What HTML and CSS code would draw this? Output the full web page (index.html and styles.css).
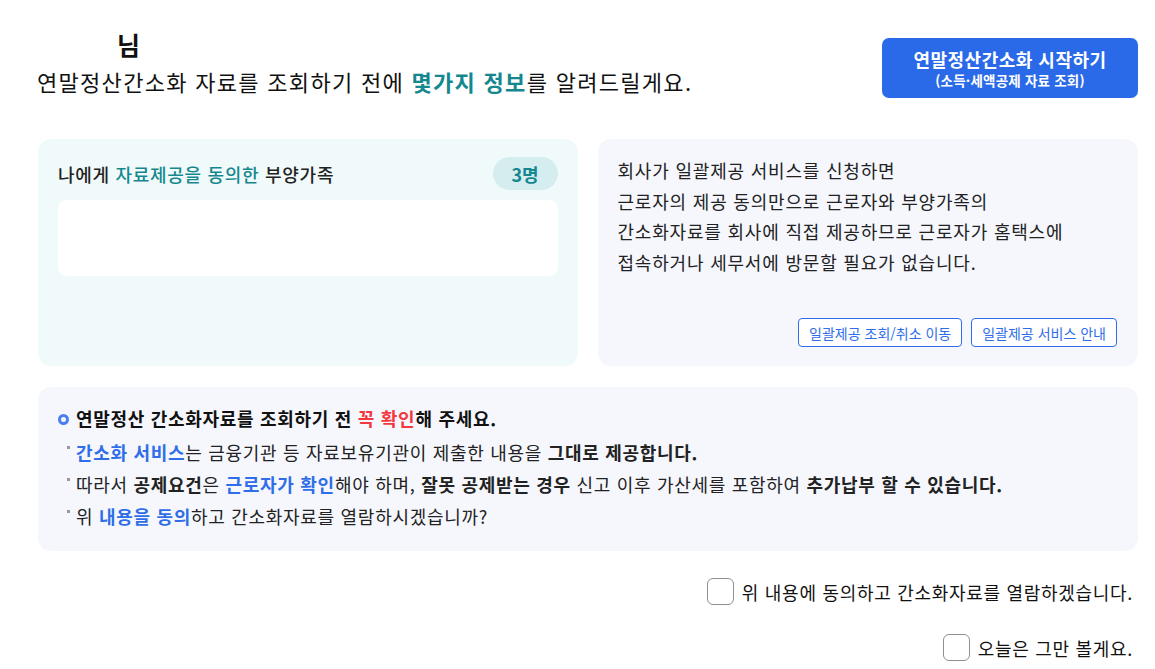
FILE: index.html
```html
<!DOCTYPE html>
<html lang="ko">
<head>
<meta charset="utf-8">
<link rel="stylesheet" href="styles.css">
</head>
<body>
<div class="page">
  <header class="head">
    <div class="head-text">
      <div class="name"><span class="user"></span>님</div>
      <div class="intro">연말정산간소화 자료를 조회하기 전에 <b class="teal">몇가지 정보</b>를 알려드릴게요.</div>
    </div>
    <button class="start-btn">
      <span class="start-main">연말정산간소화 시작하기</span>
      <span class="start-sub">(소득·세액공제 자료 조회)</span>
    </button>
  </header>

  <section class="cards">
    <div class="card card-family">
      <div class="family-head">
        <div class="family-title">나에게 <span class="teal">자료제공을 동의한</span> 부양가족</div>
        <div class="badge">3명</div>
      </div>
      <div class="family-box"></div>
    </div>
    <div class="card card-info">
      <p class="info-text">회사가 일괄제공 서비스를 신청하면<br>근로자의 제공 동의만으로 근로자와 부양가족의<br>간소화자료를 회사에 직접 제공하므로 근로자가 홈택스에<br>접속하거나 세무서에 방문할 필요가 없습니다.</p>
      <div class="info-actions">
        <button class="line-btn">일괄제공 조회/취소 이동</button>
        <button class="line-btn">일괄제공 서비스 안내</button>
      </div>
    </div>
  </section>

  <section class="notice">
    <h2 class="notice-title"><span class="ring"></span>연말정산 간소화자료를 조회하기 전 <span class="red">꼭 확인</span>해 주세요.</h2>
    <ul class="notice-list">
      <li><b class="blue">간소화 서비스</b>는 금융기관 등 자료보유기관이 제출한 내용을 <b>그대로 제공합니다.</b></li>
      <li>따라서 <b>공제요건</b>은 <b class="blue">근로자가 확인</b>해야 하며, <b>잘못 공제받는 경우</b> 신고 이후 가산세를 포함하여 <b>추가납부 할 수 있습니다.</b></li>
      <li>위 <b class="blue">내용을 동의</b>하고 간소화자료를 열람하시겠습니까?</li>
    </ul>
  </section>

  <div class="checks">
    <label class="check"><span class="box"></span><span>위 내용에 동의하고 간소화자료를 열람하겠습니다.</span></label>
    <label class="check"><span class="box"></span><span>오늘은 그만 볼게요.</span></label>
  </div>
</div>
</body>
</html>
```

FILE: styles.css
```css
* { box-sizing: border-box; }
html, body { margin: 0; padding: 0; background: #fff; }
body {
  font-family: "Noto Sans CJK KR", "Noto Sans", sans-serif;
  color: #222;
}
.page {
  width: 1155px;
  padding: 26px 17px 0 38px;
}
.teal { color: #14878f; }
.blue { color: #2f6ee8; }
.red { color: #f2383c; }
b { font-weight: 700; }

.head {
  display: flex;
  justify-content: space-between;
  align-items: flex-start;
}
.name {
  padding-left: 79px;
  font-size: 25px;
  font-weight: 700;
  line-height: 36px;
  color: #111;
}
.intro {
  margin-top: 3px;
  margin-left: -1px;
  font-size: 22px;
  line-height: 32px;
  letter-spacing: 1.3px;
  color: #111;
}
.start-btn {
  margin-top: 12px;
  width: 256px;
  height: 60px;
  border: none;
  border-radius: 7px;
  background: #2a6ae8;
  color: #fff;
  font-family: inherit;
  display: flex;
  flex-direction: column;
  align-items: center;
  justify-content: center;
  padding: 0;
}
.start-main { font-size: 18px; font-weight: 700; line-height: 23px; letter-spacing: 0.5px; }
.start-sub { font-size: 13.5px; font-weight: 700; line-height: 18px; letter-spacing: 0.2px; }

.cards {
  margin-top: 41px;
  display: flex;
  gap: 20px;
}
.card {
  flex: 1;
  height: 227px;
  border-radius: 13px;
}
.card-family {
  background: #f1fafa;
  padding: 18px 20px;
}
.family-head {
  display: flex;
  justify-content: space-between;
  align-items: center;
}
.family-title { font-size: 18px; font-weight: 500; letter-spacing: 0.7px; color: #222; }
.badge {
  width: 65px;
  height: 33px;
  border-radius: 17px;
  background: #d6edef;
  color: #14878f;
  font-size: 18px;
  font-weight: 700;
  display: flex;
  align-items: center;
  justify-content: center;
}
.family-box {
  margin-top: 10px;
  height: 76px;
  background: #fff;
  border-radius: 9px;
}
.card-info {
  background: #f5f7fd;
  padding: 16px 21px 19px 20px;
  display: flex;
  flex-direction: column;
  justify-content: space-between;
}
.info-text {
  margin: 0;
  font-size: 18px;
  line-height: 30.5px;
  letter-spacing: 0.8px;
  color: #222;
}
.info-actions {
  display: flex;
  justify-content: flex-end;
  gap: 9px;
}
.line-btn {
  height: 29px;
  padding: 0 10px;
  border: 1px solid #2f6ee8;
  border-radius: 4px;
  background: #fff;
  color: #2f6ee8;
  font-family: inherit;
  font-size: 14px;
  letter-spacing: 0;
}

.notice {
  margin-top: 21px;
  background: #f6f7fd;
  border-radius: 13px;
  padding: 15px 20px 19px 20px;
}
.notice-title {
  margin: 0 0 2px;
  font-size: 18px;
  font-weight: 700;
  line-height: 32px;
  letter-spacing: 0.7px;
  color: #111;
}
.ring {
  display: inline-block;
  vertical-align: middle;
  position: relative;
  top: -2px;
  width: 11px;
  height: 11px;
  border: 3px solid #4b7ff0;
  border-radius: 50%;
  margin-right: 7px;
}
.notice-list {
  list-style: none;
  margin: 0;
  padding: 0;
}
.notice-list li {
  position: relative;
  padding-left: 18px;
  font-size: 18px;
  line-height: 32px;
  letter-spacing: 0.7px;
  color: #222;
}
.notice-list li::before {
  content: "";
  position: absolute;
  left: 9px;
  top: 10px;
  width: 3px;
  height: 3px;
  background: #999;
}

.checks {
  margin-top: 27px;
  padding-right: 5px;
  display: flex;
  flex-direction: column;
  align-items: flex-end;
  gap: 29px;
}
.check {
  display: flex;
  align-items: center;
  gap: 8px;
  font-size: 18px;
  letter-spacing: 0.7px;
  color: #111;
}
.box {
  width: 27px;
  height: 27px;
  border: 1px solid #8f8f8f;
  border-radius: 6px;
  background: #fff;
}
```
